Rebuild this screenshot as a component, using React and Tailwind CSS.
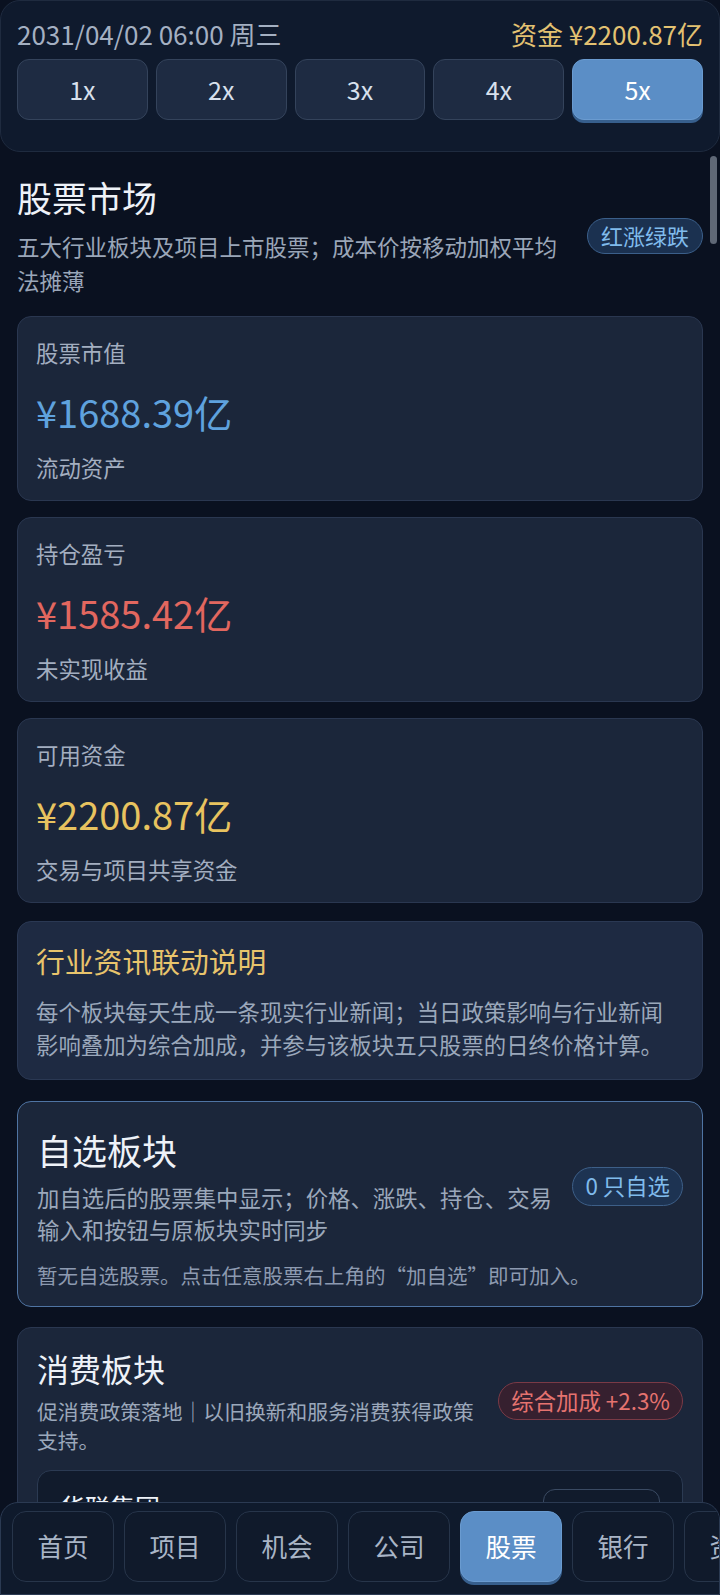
import React from 'react'

const speeds = ['1x', '2x', '3x', '4x', '5x']
const tabs = ['首页', '项目', '机会', '公司', '股票', '银行', '资产']

const stats = [
  { label: '股票市值', value: '¥1688.39亿', note: '流动资产', color: 'text-[#5fa2de]' },
  { label: '持仓盈亏', value: '¥1585.42亿', note: '未实现收益', color: 'text-[#e2675f]' },
  { label: '可用资金', value: '¥2200.87亿', note: '交易与项目共享资金', color: 'text-[#e8c35f]' },
]

function StatCard({ label, value, note, color }) {
  return (
    <div className="rounded-[14px] border border-[#2a3750] bg-[#1b263a] px-[18px] pt-[18px] pb-[16px]">
      <div className="text-[22.4px] leading-[34px] text-[#a3aec0]">{label}</div>
      <div className={`mt-[19px] text-[38px] leading-[48px] ${color}`}>{value}</div>
      <div className="mt-[14px] text-[22.4px] leading-[34px] text-[#a3aec0]">{note}</div>
    </div>
  )
}

export default function App() {
  return (
    <div className="relative flex h-[1595px] w-[720px] flex-col overflow-hidden bg-[#0a1120] font-['Noto_Sans_CJK_SC','Noto_Sans',sans-serif]">
      {/* header */}
      <div className="shrink-0 rounded-[20px] border border-[#1f2b3f] bg-[#0f1a2d] px-[16px] pt-[16px] pb-[31px]">
        <div className="flex items-center justify-between text-[26px] leading-[34px]">
          <span className="text-[#a4b0c2]">2031/04/02 06:00 周三</span>
          <span className="text-[#e3c272]">资金 ¥2200.87亿</span>
        </div>
        <div className="mt-[8px] grid grid-cols-5 gap-[8px]">
          {speeds.map((s, i) => (
            <div
              key={s}
              className={
                i === 4
                  ? 'flex h-[61px] items-center justify-center rounded-[12px] border border-[#6a9bd0] bg-[#5b8ec6] text-[25px] text-white shadow-[0_3px_0_#375f8d]'
                  : 'flex h-[61px] items-center justify-center rounded-[12px] border border-[#34435b] bg-[#1e2b42] text-[25px] text-[#d8e0ec]'
              }
            >
              {s}
            </div>
          ))}
        </div>
      </div>

      {/* content */}
      <div className="relative flex-1 overflow-hidden">
        <div className="absolute right-[3px] top-[4px] h-[88px] w-[7px] rounded-full bg-[#5f6876]" />
        <div className="px-[17px] pt-[22px]">
          <div className="flex items-center gap-[12px]">
            <div className="flex-1">
              <div className="text-[35px] leading-[45px] text-[#eef2f8]">股票市场</div>
              <div className="mt-[10px] text-[22.5px] leading-[34px] text-[#9aa6b8]">
                五大行业板块及项目上市股票；成本价按移动加权平均法摊薄
              </div>
            </div>
            <div className="flex h-[36px] shrink-0 items-center rounded-full border border-[#3b5f8a] bg-[#1b3150] px-[13px] text-[22px] text-[#80bbec]">
              红涨绿跌
            </div>
          </div>

          <div className="mt-[19px] flex flex-col gap-[16px]">
            {stats.map((s) => (
              <StatCard key={s.label} {...s} />
            ))}
          </div>

          <div className="mt-[18px] rounded-[14px] border border-[#2a3853] bg-[#1e2a42] px-[18px] pt-[20px] pb-[18px]">
            <div className="text-[28.8px] leading-[38px] text-[#e8c46c]">行业资讯联动说明</div>
            <div className="mt-[15px] text-[22.4px] leading-[33px] text-[#9ba8bb]">
              每个板块每天生成一条现实行业新闻；当日政策影响与行业新闻影响叠加为综合加成，并参与该板块五只股票的日终价格计算。
            </div>
          </div>

          <div className="mt-[21px] rounded-[14px] border border-[#4f74a3] bg-[#1b263a] px-[19px] pt-[25px] pb-[16px]">
            <div className="flex items-center gap-[15px]">
              <div className="flex-1">
                <div className="text-[35px] leading-[45px] text-[#eef2f8]">自选板块</div>
                <div className="mt-[9px] text-[22.4px] leading-[32px] text-[#9ba8bb]">
                  加自选后的股票集中显示；价格、涨跌、持仓、交易输入和按钮与原板块实时同步
                </div>
              </div>
              <div className="flex h-[39px] shrink-0 items-center rounded-full border border-[#3d5f88] bg-[#1d3352] px-[12px] text-[22.4px] text-[#80bbec]">
                0 只自选
              </div>
            </div>
            <div className="mt-[15px] text-[20.5px] leading-[30px] text-[#8d9ab0]">
              暂无自选股票。点击任意股票右上角的“加自选”即可加入。
            </div>
          </div>

          <div className="mt-[20px] rounded-[14px] border border-[#2a3750] bg-[#1b263a] px-[19px] pt-[19px] pb-[20px]">
            <div className="flex items-center gap-[18px]">
              <div className="flex-1">
                <div className="text-[32px] leading-[42px] text-[#eef2f8]">消费板块</div>
                <div className="mt-[8px] text-[20.8px] leading-[29px] text-[#9ba8bb]">
                  促消费政策落地｜以旧换新和服务消费获得政策支持。
                </div>
              </div>
              <div className="flex h-[38px] shrink-0 items-center rounded-full border border-[#7a3a46] bg-[#36202f] px-[12px] text-[22.4px] text-[#e5736f]">
                综合加成 +2.3%
              </div>
            </div>
            <div className="mt-[15px] rounded-[14px] border border-[#2b3a52] bg-[#111b2c] px-[22px] pt-[18px] pb-[20px]">
              <div className="flex items-start justify-between">
                <div className="text-[25px] leading-[34px] text-[#eef2f8]">华联集团</div>
                <div className="h-[60px] w-[117px] rounded-[12px] border border-[#3a4a62]" />
              </div>
              <div className="h-[120px]" />
            </div>
          </div>
        </div>
      </div>

      {/* bottom nav */}
      <div className="absolute bottom-0 left-0 right-0 h-[93px] overflow-hidden rounded-t-[18px] border border-[#2b3a52] bg-[#0f1a2c]">
        <div className="flex gap-[10px] pl-[11px] pt-[8px]">
          {tabs.map((t) => (
            <div
              key={t}
              className={
                t === '股票'
                  ? 'flex h-[71px] w-[102px] shrink-0 items-center justify-center rounded-[14px] border border-[#6a9bd0] bg-[#5b8ec6] text-[25.6px] text-white shadow-[0_3px_0_#375f8d]'
                  : 'flex h-[71px] w-[102px] shrink-0 items-center justify-center rounded-[14px] border border-[#27354a] bg-[#101a2b] text-[25.6px] text-[#a9b5c6]'
              }
            >
              {t}
            </div>
          ))}
        </div>
      </div>
    </div>
  )
}
